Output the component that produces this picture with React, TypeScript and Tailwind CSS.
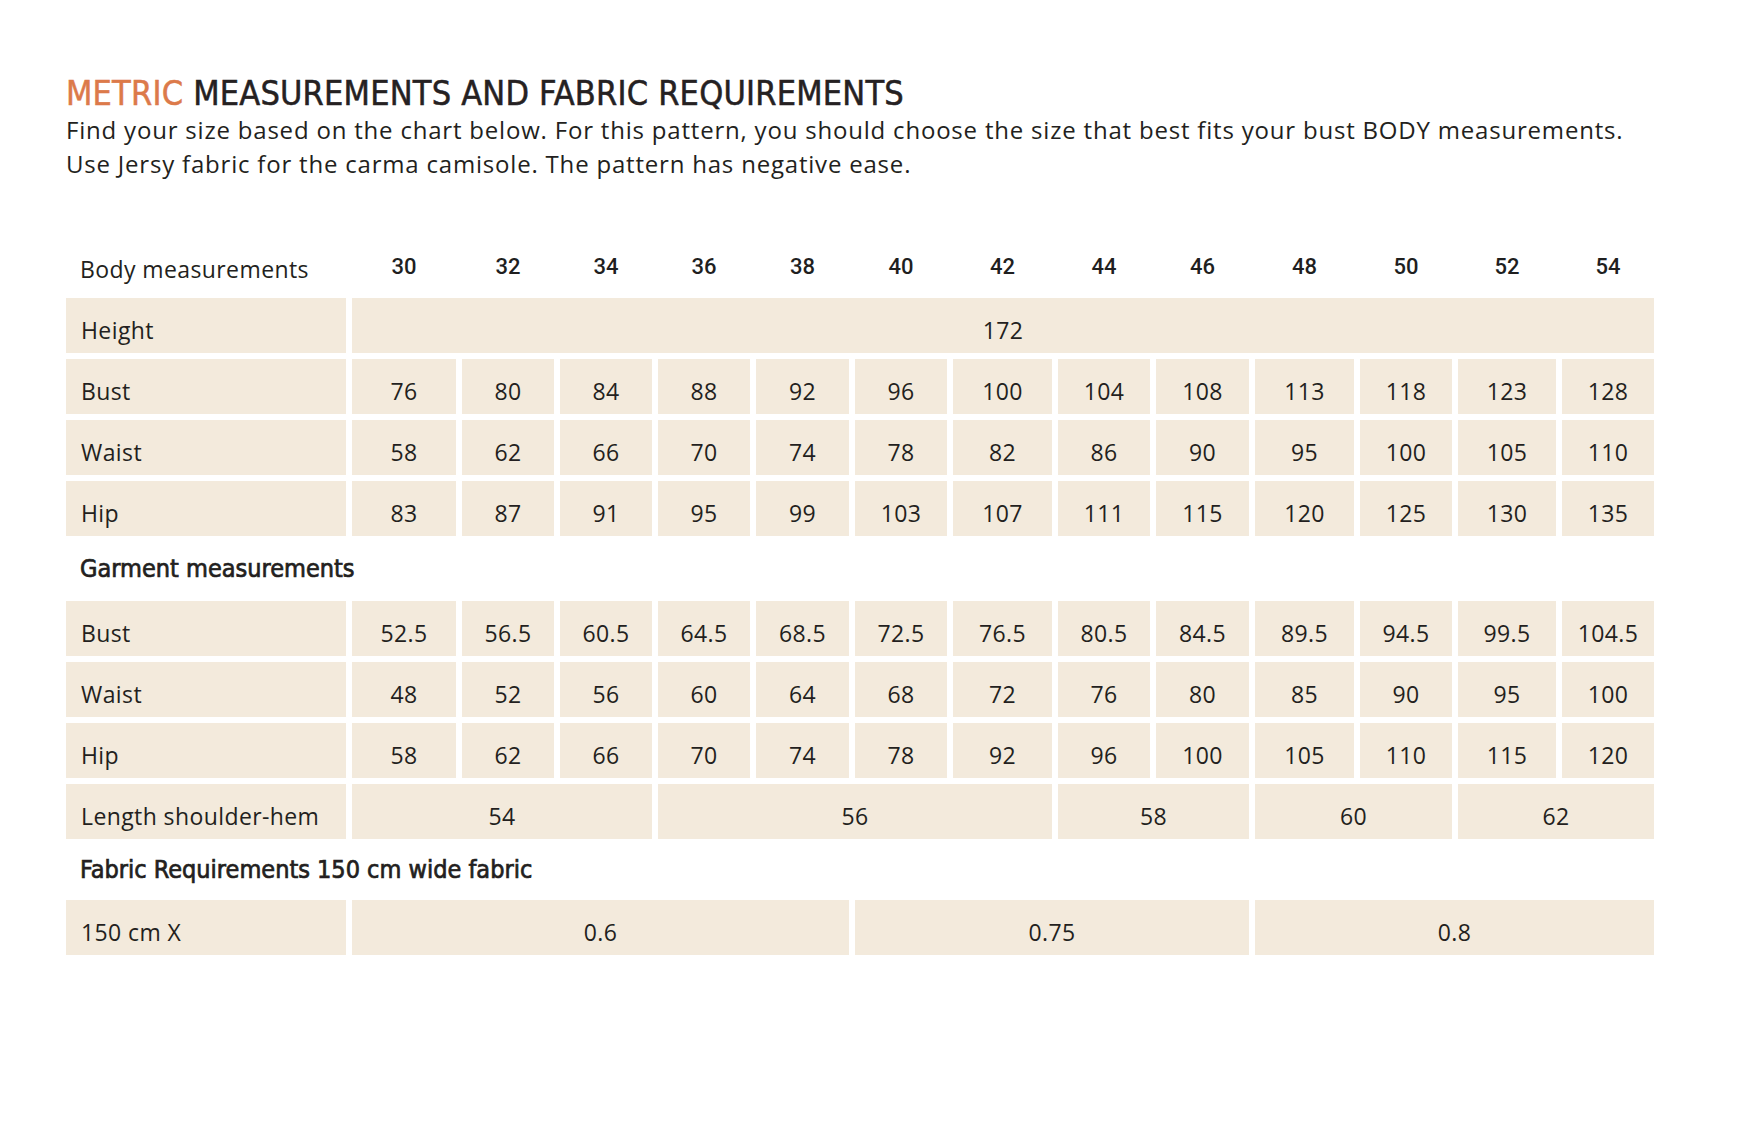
const sizes = ["30", "32", "34", "36", "38", "40", "42", "44", "46", "48", "50", "52", "54"];

const body = [
  { label: "Bust", values: ["76", "80", "84", "88", "92", "96", "100", "104", "108", "113", "118", "123", "128"] },
  { label: "Waist", values: ["58", "62", "66", "70", "74", "78", "82", "86", "90", "95", "100", "105", "110"] },
  { label: "Hip", values: ["83", "87", "91", "95", "99", "103", "107", "111", "115", "120", "125", "130", "135"] },
];

const garment = [
  { label: "Bust", values: ["52.5", "56.5", "60.5", "64.5", "68.5", "72.5", "76.5", "80.5", "84.5", "89.5", "94.5", "99.5", "104.5"] },
  { label: "Waist", values: ["48", "52", "56", "60", "64", "68", "72", "76", "80", "85", "90", "95", "100"] },
  { label: "Hip", values: ["58", "62", "66", "70", "74", "78", "92", "96", "100", "105", "110", "115", "120"] },
];

const lengths = [
  { value: "54", span: "col-span-3" },
  { value: "56", span: "col-span-4" },
  { value: "58", span: "col-span-2" },
  { value: "60", span: "col-span-2" },
  { value: "62", span: "col-span-2" },
];

const fabric = [
  { value: "0.6", span: "col-span-5" },
  { value: "0.75", span: "col-span-4" },
  { value: "0.8", span: "col-span-4" },
];

// condensed headline face
const cond = "font-['DejaVu_Sans_Condensed',sans-serif]";

function Label({ children }: { children: React.ReactNode }) {
  return (
    <div className="flex h-[55px] items-center bg-[#f3eadc] pl-[15px] pt-[9px] text-[23px] tracking-[0.4px] text-[#231f20]">
      {children}
    </div>
  );
}

function Cell({ children, span = "" }: { children: React.ReactNode; span?: string }) {
  return (
    <div className={`flex h-[55px] items-center justify-center bg-[#f3eadc] pt-[9px] text-[23px] tracking-[0.4px] text-[#231f20] ${span}`}>
      {children}
    </div>
  );
}

export default function App() {
  return (
    <div className="min-h-[1148px] bg-white pl-[66px] pt-[73px] font-['Open_Sans',sans-serif] text-[#231f20]">
      <h1 className={`${cond} text-[34px] leading-[40px] tracking-[0.2px] text-[#252122] [-webkit-text-stroke:0.5px_currentColor]`}>
        <span className="text-[#dc7a4a]">METRIC</span> MEASUREMENTS AND FABRIC REQUIREMENTS
      </h1>
      <p className="text-[24px] leading-[34px] tracking-[0.8px]">
        Find your size based on the chart below. For this pattern, you should choose the size that best fits your bust BODY measurements.
        <br />
        Use Jersy fabric for the carma camisole. The pattern has negative ease.
      </p>

      <div className="mt-[59px] grid w-[1590px] grid-cols-[280px_104px_92px_92px_92px_93px_92px_99px_92px_93px_99px_92px_98px_92px] gap-[6px]">
        <div className="flex h-[52px] items-center pl-[14px] pt-[6px] text-[23px] tracking-[0.4px]">Body measurements</div>
        {sizes.map((s) => (
          <div key={s} className="flex h-[52px] items-center justify-center font-['Roboto',sans-serif] text-[22px] font-medium text-[#1f1f1f]">
            {s}
          </div>
        ))}

        <Label>Height</Label>
        <Cell span="col-span-13">172</Cell>

        {body.map((row) => (
          <>
            <Label key={row.label}>{row.label}</Label>
            {row.values.map((v, i) => (
              <Cell key={row.label + i}>{v}</Cell>
            ))}
          </>
        ))}

        <div className={`col-span-14 flex h-[53px] items-center pl-[14px] ${cond} text-[25px] text-[#231f20] [-webkit-text-stroke:0.7px_currentColor]`}>
          Garment measurements
        </div>

        {garment.map((row) => (
          <>
            <Label key={"g" + row.label}>{row.label}</Label>
            {row.values.map((v, i) => (
              <Cell key={"g" + row.label + i}>{v}</Cell>
            ))}
          </>
        ))}

        <Label>Length shoulder-hem</Label>
        {lengths.map((l) => (
          <Cell key={l.value} span={l.span}>
            {l.value}
          </Cell>
        ))}

        <div className={`col-span-14 flex h-[49px] items-center pl-[14px] ${cond} text-[25px] text-[#231f20] [-webkit-text-stroke:0.7px_currentColor]`}>
          Fabric Requirements 150 cm wide fabric
        </div>

        <Label>150 cm X</Label>
        {fabric.map((f) => (
          <Cell key={f.value} span={f.span}>
            {f.value}
          </Cell>
        ))}
      </div>
    </div>
  );
}
